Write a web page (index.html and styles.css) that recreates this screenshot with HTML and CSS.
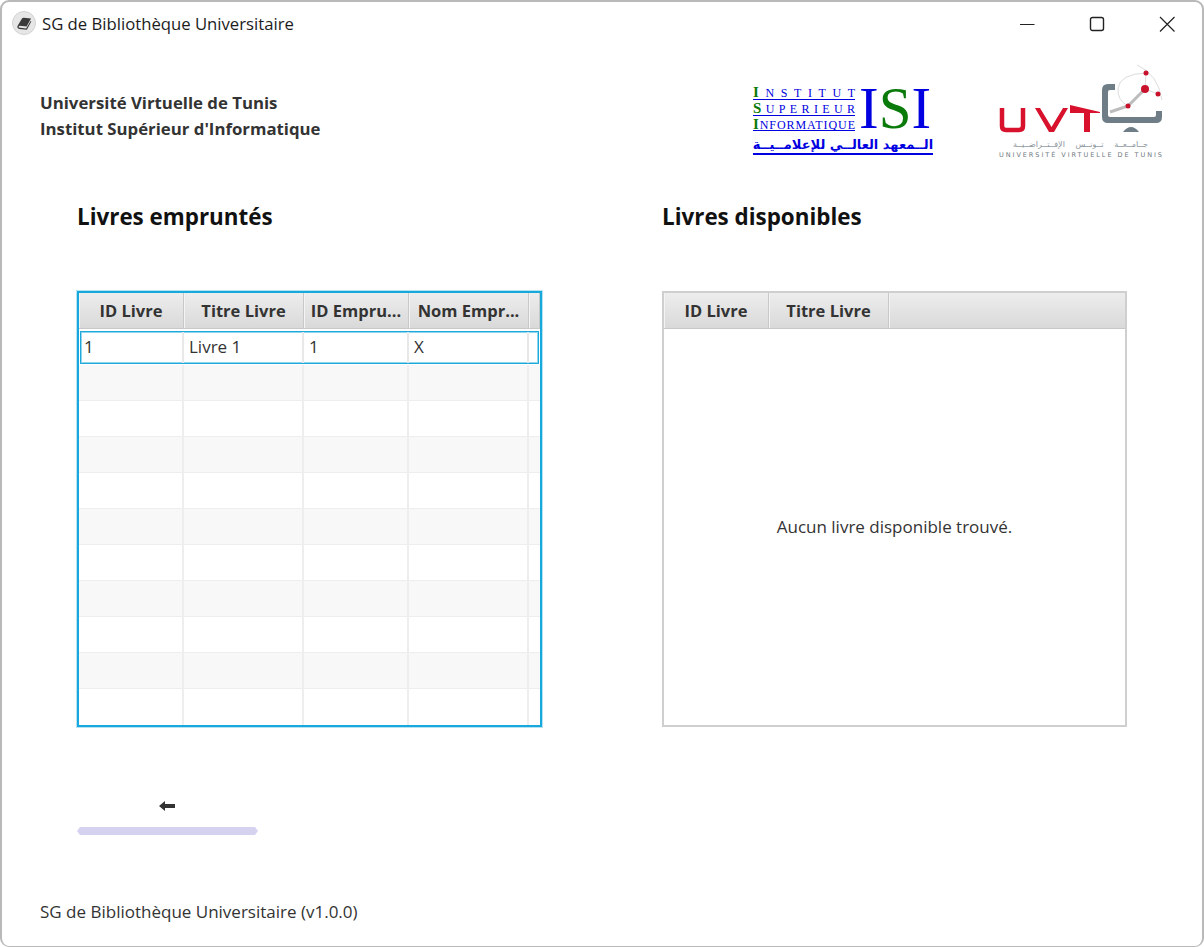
FILE: index.html
```html
<!DOCTYPE html>
<html lang="fr">
<head>
  <meta charset="UTF-8">
  <title>SG de Bibliothèque Universitaire</title>
  <link rel="stylesheet" href="styles.css">
</head>
<body>
  <div class="window">
    <!-- Barre de titre -->
    <div class="titlebar">
      <div class="app-icon">
        <svg width="24" height="24" viewBox="0 0 24 24">
          <circle cx="12" cy="12" r="11.5" fill="#e6e6e6" stroke="#d2d2d2"/>
          <path d="M5.5 15 L10 7.5 Q10.6 6.6 11.8 6.7 L19 7.6 L14.6 15.6 L7.6 14.8 Q6.2 15.2 6.8 16.6 L14.2 17.5 L18.6 10 L19.3 10.6 L14.9 18.8 L7.4 18 Q4.8 17.4 5.5 15 Z" fill="#3a3a3a"/>
        </svg>
      </div>
      <span class="app-title">SG de Bibliothèque Universitaire</span>
      <div class="win-buttons">
        <svg class="win-btn" width="16" height="16" viewBox="0 0 16 16"><path d="M1 8.5 H15.5" stroke="#222" fill="none"/></svg>
        <svg class="win-btn" width="16" height="16" viewBox="0 0 16 16"><rect x="1.5" y="1.5" width="13" height="13" rx="2" stroke="#222" stroke-width="1.4" fill="none"/></svg>
        <svg class="win-btn" width="16" height="16" viewBox="0 0 16 16"><path d="M1 1 L15.5 15.5 M15.5 1 L1 15.5" stroke="#222" stroke-width="1.2" fill="none"/></svg>
      </div>
    </div>

    <!-- En-tete -->
    <div class="header">
      <div class="org">
        <div>Université Virtuelle de Tunis</div>
        <div>Institut Supérieur d'Informatique</div>
      </div>
      <div class="logos">
        <svg class="logo-isi" width="184" height="88" viewBox="0 -12 184 88">
          <text x="0" y="12" class="isi-small" textLength="102"><tspan class="isi-initial">I</tspan>NSTITUT</text>
          <path d="M0 14.5 H102" stroke="#0000e0"/>
          <text x="0" y="28" class="isi-small" textLength="102"><tspan class="isi-initial">S</tspan>UPERIEUR</text>
          <path d="M0 30.5 H102" stroke="#0000e0"/>
          <text x="0" y="44" class="isi-small" textLength="102"><tspan class="isi-initial">I</tspan>NFORMATIQUE</text>
          <path d="M0 45.5 H102" stroke="#0000e0"/>
          <text x="106" y="43" class="isi-big"><tspan fill="#0000e0">I</tspan><tspan fill="#0a7a0a">S</tspan><tspan fill="#0000e0">I</tspan></text>
          <text x="90" y="64" class="isi-ar" text-anchor="middle">الــمعهد العالــي للإعلامــيــة</text>
          <path d="M0 69 H180" stroke="#0000e0" stroke-width="2"/>
        </svg>
        <svg class="logo-uvt" width="180" height="100" viewBox="0 0 180 100">
          <!-- arcs -->
          <path d="M147 5 Q168 14 172 40" fill="none" stroke="#dcdcdc"/>
          <path d="M156 13 Q130 14 128 28 Q127 40 138 46" fill="none" stroke="#dcdcdc"/>
          <path d="M155 29 L168 34 M156 13 L155 29" fill="none" stroke="#dcdcdc"/>
          <path d="M120 52 L138 46 L155 29" fill="none" stroke="#bcbcbc" stroke-width="3"/>
          <!-- ecran -->
          <path d="M125 24 H118 Q112 24 112 30 V57 Q112 63 118 63 H166 Q172 63 172 57 V51 H166 V55 Q166 57 164 57 H120 Q118 57 118 55 V32 Q118 30 120 30 H125 Z" fill="#6f7d86"/>
          <path d="M133 72 Q141 62 149 72 Z" fill="#6f7d86"/>
          <circle cx="156" cy="13" r="2.5" fill="#c9112b"/>
          <circle cx="155" cy="29" r="4" fill="#c9112b"/>
          <circle cx="168" cy="34" r="2.5" fill="#c9112b"/>
          <circle cx="138" cy="46" r="2.5" fill="#c9112b"/>
          <!-- UVT -->
          <path d="M12 48 V66 Q12 70 16 70 H29 Q33 70 33 66 V48" fill="none" stroke="#d8112c" stroke-width="4.5"/>
          <path d="M45 48 H50 L61.5 67 L73 48 H78 L64 72 H59 Z" fill="#d8112c"/>
          <path d="M80 45 L110 52 V53 H100 V72 H94 V53 H80 Z" fill="#d8112c"/>
          <text x="90.5" y="87" class="uvt-ar" text-anchor="middle">جــامــعــة تــونــس الإفــتــراضــيــة</text>
          <text x="9" y="96.5" class="uvt-fr" textLength="163">UNIVERSITÉ VIRTUELLE DE TUNIS</text>
        </svg>
      </div>
    </div>

    <!-- Les deux tableaux -->
    <div class="panels">
      <div class="panel">
        <h2>Livres empruntés</h2>
        <div class="table table-focus">
          <div class="row head borrowed">
            <div class="th">ID Livre</div>
            <div class="th">Titre Livre</div>
            <div class="th">ID Empru...</div>
            <div class="th">Nom Empr...</div>
            <div class="th"></div>
          </div>
          <div class="rows">
            <div class="row borrowed selected">
              <div class="td">1</div><div class="td">Livre 1</div><div class="td">1</div><div class="td">X</div><div class="td"></div>
            </div>
            <div class="row borrowed odd"><div class="td"></div><div class="td"></div><div class="td"></div><div class="td"></div><div class="td"></div></div>
            <div class="row borrowed"><div class="td"></div><div class="td"></div><div class="td"></div><div class="td"></div><div class="td"></div></div>
            <div class="row borrowed odd"><div class="td"></div><div class="td"></div><div class="td"></div><div class="td"></div><div class="td"></div></div>
            <div class="row borrowed"><div class="td"></div><div class="td"></div><div class="td"></div><div class="td"></div><div class="td"></div></div>
            <div class="row borrowed odd"><div class="td"></div><div class="td"></div><div class="td"></div><div class="td"></div><div class="td"></div></div>
            <div class="row borrowed"><div class="td"></div><div class="td"></div><div class="td"></div><div class="td"></div><div class="td"></div></div>
            <div class="row borrowed odd"><div class="td"></div><div class="td"></div><div class="td"></div><div class="td"></div><div class="td"></div></div>
            <div class="row borrowed"><div class="td"></div><div class="td"></div><div class="td"></div><div class="td"></div><div class="td"></div></div>
            <div class="row borrowed odd"><div class="td"></div><div class="td"></div><div class="td"></div><div class="td"></div><div class="td"></div></div>
            <div class="row borrowed last"><div class="td"></div><div class="td"></div><div class="td"></div><div class="td"></div><div class="td"></div></div>
          </div>
        </div>
        <button class="back-btn" type="button">
          <svg class="back-arrow" width="16" height="10" viewBox="0 0 16 10"><path d="M0 5 L6 0 V3 H16 V7 H6 V10 Z" fill="#333"/></svg>
          <span class="back-bar"></span>
        </button>
      </div>

      <div class="panel">
        <h2>Livres disponibles</h2>
        <div class="table">
          <div class="row head available">
            <div class="th">ID Livre</div>
            <div class="th">Titre Livre</div>
            <div class="th"></div>
          </div>
          <div class="empty">Aucun livre disponible trouvé.</div>
        </div>
      </div>
    </div>

    <div class="footer">SG de Bibliothèque Universitaire (v1.0.0)</div>
  </div>
</body>
</html>
```

FILE: styles.css
```css
html, body {
  margin: 0;
  padding: 0;
  background: #fff;
}
body {
  font-family: "Open Sans", "Noto Sans", sans-serif;
  color: #333;
}
.window {
  box-sizing: border-box;
  width: 1204px;
  height: 947px;
  border: 2px solid #b9b9b9;
  border-bottom-width: 1px;
  border-radius: 9px;
  background: #fff;
  display: flex;
  flex-direction: column;
}
/* Barre de titre */
.titlebar {
  height: 44px;
  display: flex;
  align-items: center;
  padding-left: 10px;
  flex: none;
}
.app-icon {
  display: flex;
  margin-top: -2px;
}
.app-title {
  margin-left: 6px;
  margin-top: -2px;
  font-size: 16.7px;
  color: #1c1c1c;
}
.win-buttons {
  margin-left: auto;
  display: flex;
  gap: 54px;
  padding-right: 27px;
}
/* En-tete */
.header {
  height: 126px;
  flex: none;
  display: flex;
  justify-content: space-between;
  padding-left: 38px;
}
.org {
  font-size: 16.8px;
  font-weight: 700;
  line-height: 26px;
  padding-top: 44px;
  color: #333;
}
.logos {
  display: flex;
  gap: 53px;
  padding-right: 32px;
}
.logo-isi {
  margin-top: 27px;
}
.logo-uvt {
  margin-top: 14px;
}
.isi-small {
  font-family: "Liberation Serif", serif;
  font-size: 12px;
  fill: #0000e0;
}
.isi-initial {
  fill: #0a7a0a;
  font-weight: 700;
  font-size: 15px;
}
.isi-big {
  font-family: "Liberation Serif", serif;
  font-size: 59px;
}
.isi-ar {
  font-family: "DejaVu Sans", sans-serif;
  font-size: 13px;
  font-weight: 700;
  fill: #0000e0;
}
.uvt-ar {
  font-family: "DejaVu Sans", sans-serif;
  font-size: 8px;
  word-spacing: 8px;
  fill: #8a949b;
}
.uvt-fr {
  font-family: "DejaVu Sans", sans-serif;
  font-size: 6.5px;
  fill: #6f7a82;
}
/* Panneaux */
.panels {
  display: flex;
  gap: 120px;
  padding-left: 75px;
  flex: 1;
}
.panel {
  width: 465px;
}
h2 {
  margin: 0;
  height: 119px;
  padding-top: 29px;
  box-sizing: border-box;
  font-size: 22.4px;
  line-height: 32px;
  font-weight: 700;
  color: #111;
}
.table {
  box-sizing: border-box;
  width: 465px;
  height: 436px;
  border: 2px solid #cfcfcf;
  display: flex;
  flex-direction: column;
  background: #fff;
}
.table-focus {
  border-color: #18a9dc;
  box-shadow: 0 0 0 1px #b5e3f4;
}
.row {
  display: grid;
  height: 36px;
}
.borrowed {
  grid-template-columns: 105px 120px 105px 120px 1fr;
}
.available {
  grid-template-columns: 105px 120px 1fr;
}
.row.head {
  height: 36px;
  background: linear-gradient(#ededed, #d9d9d9);
  border-bottom: 1px solid #c8c8c8;
  box-sizing: border-box;
}
.th {
  box-sizing: border-box;
  border-right: 1px solid #c8c8c8;
  border-left: 1px solid #f4f4f4;
  padding-right: 1px;
  font-size: 16.5px;
  font-weight: 700;
  line-height: 36px;
  text-align: center;
  white-space: nowrap;
  overflow: hidden;
  color: #333;
}
.available .th:last-child {
  border-right: none;
}
.rows {
  flex: 1;
  padding-top: 2px;
}
.row.selected {
  box-sizing: border-box;
  height: 33px;
  margin: 0 1px 1px 1px;
  border: 1px solid #1fa9da;
  box-shadow: inset 0 0 0 1px #8ed6ee;
  grid-template-columns: 103px 120px 105px 120px 1fr;
}
.row.odd {
  background: #f8f8f8;
}
.row:not(.head):not(.selected) {
  box-sizing: border-box;
  border-bottom: 1px solid #eee;
}
.row.last {
  border-bottom: none !important;
}
.td {
  box-sizing: border-box;
  border-right: 2px solid #eee;
  padding-left: 5px;
  font-size: 17px;
  line-height: 29px;
  color: #333;
}
.selected .td {
  border-right-color: #e8e8e8;
}
.selected .td:first-child {
  padding-left: 3px;
}
.borrowed .td:last-child {
  border-right: none;
}
.empty {
  flex: 1;
  display: flex;
  align-items: center;
  justify-content: center;
  font-size: 17px;
  color: #333;
  padding-bottom: 2px;
}
/* Bouton retour */
.back-btn {
  display: flex;
  flex-direction: column;
  align-items: center;
  gap: 16px;
  width: 181px;
  margin-top: 74px;
  padding: 0;
  border: none;
  background: none;
}
.back-arrow {
  margin-right: 1px;
}
.back-bar {
  display: block;
  width: 100%;
  height: 8px;
  background: #d5d2f0;
  clip-path: polygon(3px 0, calc(100% - 3px) 0, 100% 50%, calc(100% - 3px) 100%, 3px 100%, 0 50%);
}
.footer {
  flex: none;
  height: 70px;
  padding-top: 23px;
  box-sizing: border-box;
  padding-left: 38px;
  font-size: 17px;
  line-height: 26px;
  color: #333;
}
```
